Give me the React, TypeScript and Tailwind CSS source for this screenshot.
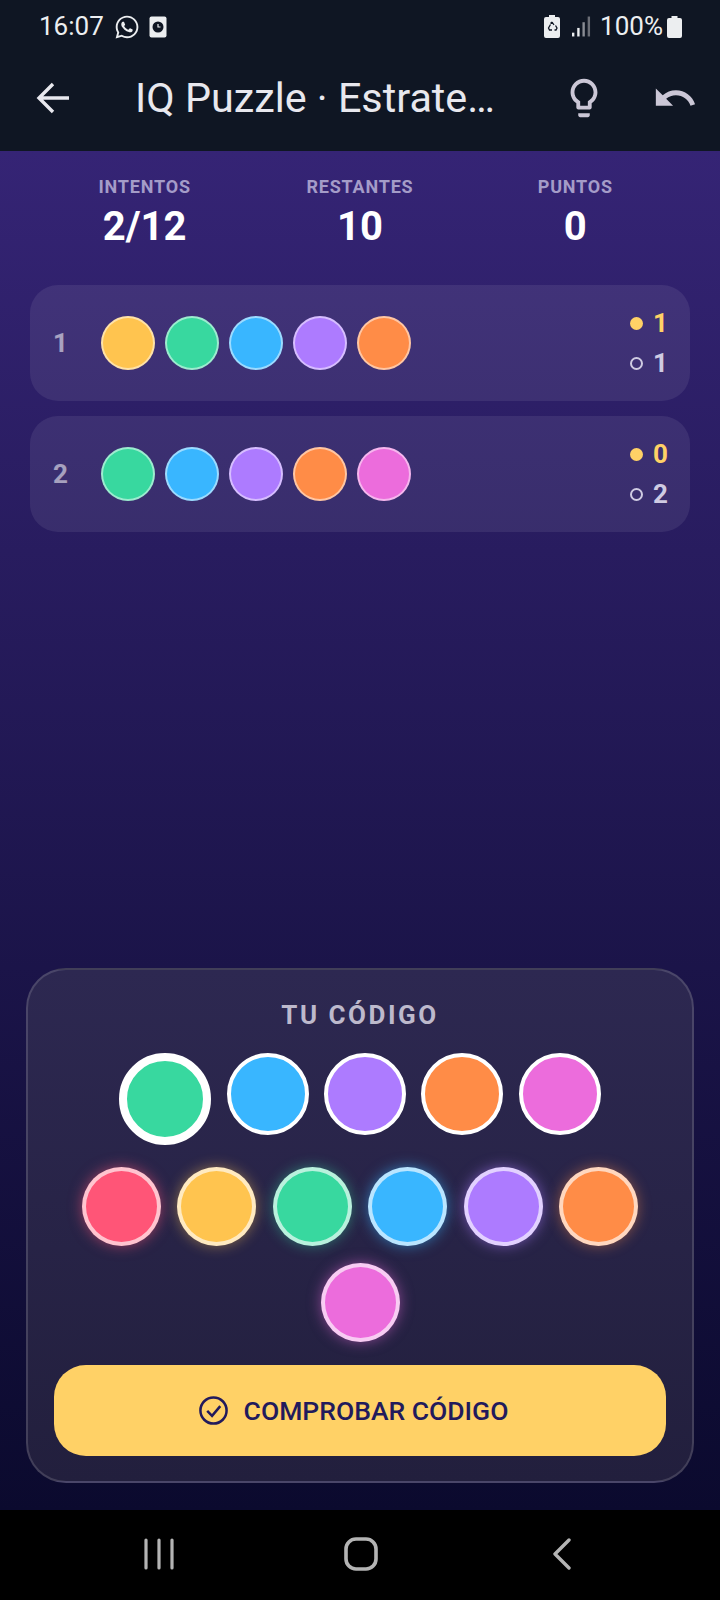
import { FaWhatsapp } from "react-icons/fa";

const RED = "bg-[#ff5577]";
const YELLOW = "bg-[#ffc44f]";
const GREEN = "bg-[#38d89f]";
const BLUE = "bg-[#39b6ff]";
const PURPLE = "bg-[#ad7bff]";
const ORANGE = "bg-[#ff8c47]";
const PINK = "bg-[#ec6cdc]";

const attempts = [
  { n: 1, colors: [YELLOW, GREEN, BLUE, PURPLE, ORANGE], exact: 1, near: 1 },
  { n: 2, colors: [GREEN, BLUE, PURPLE, ORANGE, PINK], exact: 0, near: 2 },
];

const stats = [
  { label: "INTENTOS", value: "2/12" },
  { label: "RESTANTES", value: "10" },
  { label: "PUNTOS", value: "0" },
];

const palette = [
  `${RED} shadow-[0_0_14px_rgba(255,85,119,0.55)]`,
  `${YELLOW} shadow-[0_0_14px_rgba(255,196,79,0.45)]`,
  `${GREEN} shadow-[0_0_14px_rgba(56,216,159,0.45)]`,
  `${BLUE} shadow-[0_0_14px_rgba(57,182,255,0.55)]`,
  `${PURPLE} shadow-[0_0_14px_rgba(173,123,255,0.55)]`,
  `${ORANGE} shadow-[0_0_14px_rgba(255,140,71,0.45)]`,
  `${PINK} shadow-[0_0_14px_rgba(236,108,220,0.5)]`,
];

function StatusBar() {
  return (
    <div className="h-[50px] pl-[39px] pr-[38px] pt-[3px] flex items-center justify-between text-[26px] text-[#eceef0]">
      <div className="flex items-center">
        <span>16:07</span>
        <FaWhatsapp className="ml-[10px] w-[26px] h-[26px]" />
        <svg className="ml-[9px]" width="18" height="22" viewBox="0 0 18 22">
          <rect x="0.5" y="0.5" width="17" height="21" rx="2" fill="#eceef0" />
          <circle cx="9" cy="11" r="5.5" fill="#0f1623" />
          <path d="M9 8v3h2.5" stroke="#eceef0" strokeWidth="1.2" fill="none" />
        </svg>
      </div>
      <div className="flex items-center">
        <svg width="16" height="23" viewBox="0 0 16 23">
          <path d="M5 0h6v2h3a2 2 0 0 1 2 2v17a2 2 0 0 1-2 2H2a2 2 0 0 1-2-2V4a2 2 0 0 1 2-2h3z" fill="#eceef0" />
          <path d="M8 7l2 3M6.5 9.5L4.5 13l1 2h2.5M10.5 15h1.5l1-2-1.5-2.5M6.5 8.500L8 7" stroke="#0f1623" strokeWidth="1.3" fill="none" />
        </svg>
        <svg className="ml-[12px]" width="19" height="21" viewBox="0 0 20 21">
          <rect x="0" y="17" width="2.500" height="4" fill="#eceef0" />
          <rect x="5.500" y="12" width="2.500" height="9" fill="#eceef0" />
          <rect x="11" y="6" width="2.500" height="15" fill="#8a8d94" />
          <rect x="16.500" y="0" width="2.500" height="21" fill="#6b6e76" />
        </svg>
        <span className="ml-[9px]">100%</span>
        <svg className="ml-[4px]" width="15" height="22" viewBox="0 0 15 22">
          <path d="M4.500 0h6v2h2.500a2 2 0 0 1 2 2v16a2 2 0 0 1-2 2H2a2 2 0 0 1-2-2V4a2 2 0 0 1 2-2h2.500z" fill="#eceef0" />
        </svg>
      </div>
    </div>
  );
}

function AppBar() {
  return (
    <div className="h-[101px] flex items-center pb-[5px]">
      <svg className="ml-[36px]" width="34" height="32" viewBox="0 0 34 32" fill="none" stroke="#e8e8ee" strokeWidth="3.4">
        <path d="M33 16H3M17 2L3 16l14 14" />
      </svg>
      <span className="ml-[65px] w-[366px] text-[41.3px] leading-[48px] text-[#e8e8ee] whitespace-nowrap">
        IQ Puzzle · Estrate…
      </span>
      <svg className="ml-[60px]" width="46" height="46" viewBox="0 0 24 24" fill="#cbc7d6">
        <path d="M9 21c0 .55.45 1 1 1h4c.55 0 1-.45 1-1v-1H9v1zm3-19C8.140 2 5 5.140 5 9c0 2.380 1.190 4.470 3 5.740V17c0 .55.45 1 1 1h6c.55 0 1-.45 1-1v-2.260c1.810-1.270 3-3.360 3-5.740 0-3.860-3.140-7-7-7zm2.850 11.100l-.85.6V16h-4v-2.300l-.85-.6C7.800 12.160 7 10.630 7 9c0-2.760 2.240-5 5-5s5 2.240 5 5c0 1.630-.8 3.160-2.150 4.100z" />
      </svg>
      <svg className="ml-[45px]" width="46" height="46" viewBox="0 0 24 24" fill="#cbc7d6">
        <path d="M12.500 8c-2.650 0-5.050.99-6.900 2.600L2 7v9h9l-3.620-3.620c1.390-1.160 3.160-1.880 5.120-1.880 3.540 0 6.550 2.310 7.600 5.500l2.370-.78C21.080 11.030 17.150 8 12.500 8z" />
      </svg>
    </div>
  );
}

function Attempt({ n, colors, exact, near }: { n: number; colors: string[]; exact: number; near: number }) {
  return (
    <div className="h-[116px] rounded-[28px] bg-white/[0.08] flex items-center pl-[23px] pr-[23px]">
      <span className="w-[48px] text-[26px] font-bold text-white/55">{n}</span>
      <div className="flex gap-[10px]">
        {colors.map((c, i) => (
          <div key={i} className={`w-[54px] h-[54px] rounded-full border-2 border-white/50 ${c}`} />
        ))}
      </div>
      <div className="ml-auto flex flex-col gap-[10px] text-[26px] font-bold leading-[30px]">
        <div className="flex items-center gap-[10px] text-[#ffd166]">
          <span className="w-[13px] h-[13px] rounded-full bg-[#ffd166]" />
          <span className="w-[14px]">{exact}</span>
        </div>
        <div className="flex items-center gap-[10px] text-[#cfcbe2]">
          <span className="w-[13px] h-[13px] rounded-full border-2 border-[#cfcbe2]" />
          <span className="w-[14px]">{near}</span>
        </div>
      </div>
    </div>
  );
}

function CodePanel() {
  const slots = [GREEN, BLUE, PURPLE, ORANGE, PINK];
  return (
    <div className="mx-[26px] h-[515px] rounded-[40px] border-2 border-white/[0.14] bg-gradient-to-b from-[#2d2851] to-[#221f3d] px-[26px] pt-[29px]">
      <div className="text-center text-[26px] leading-[32px] font-bold tracking-[2.5px] text-[#bdb9cc]">TU CÓDIGO</div>
      <div className="mt-[22px] flex justify-center items-start gap-[15.3px]">
        {slots.map((c, i) => (
          <div
            key={i}
            className={
              i === 0
                ? `w-[92px] h-[92px] rounded-full border-[8px] border-white ${c}`
                : `w-[82px] h-[82px] rounded-full border-[4px] border-white ${c}`
            }
          />
        ))}
      </div>
      <div className="mt-[22px] flex flex-wrap justify-center gap-x-[16.6px] gap-y-[17px]">
        {palette.map((c, i) => (
          <div key={i} className={`w-[79px] h-[79px] rounded-full border-[4px] border-white/65 ${c}`} />
        ))}
      </div>
      <button className="mt-[23px] w-full h-[91px] rounded-[32px] bg-[#ffd166] flex items-center justify-center gap-[15px] pr-[14px] text-[26.5px] font-medium text-[#221a5c]">
        <svg width="31" height="31" viewBox="0 0 32 32" fill="none" stroke="#221a5c" strokeWidth="2.600">
          <circle cx="16" cy="16" r="13.500" />
          <path d="M9.500 16.500l5 5 8.500-10" />
        </svg>
        COMPROBAR CÓDIGO
      </button>
    </div>
  );
}

export default function App() {
  return (
    <div className="w-[720px] h-[1600px] flex flex-col font-['Roboto',sans-serif]">
      <header className="h-[151px] bg-[#0f1623]">
        <StatusBar />
        <AppBar />
      </header>

      <main className="flex-1 flex flex-col bg-gradient-to-b from-[#352475] to-[#0b0a2e] pb-[27px]">
        <div className="grid grid-cols-3 px-[37px] pt-[25px]">
          {stats.map((s) => (
            <div key={s.label} className="flex flex-col items-center">
              <span className="text-[18px] leading-[22px] font-bold tracking-[0.8px] text-[#a49cc8]">{s.label}</span>
              <span className="mt-[6px] text-[40px] leading-[46px] font-bold text-white">{s.value}</span>
            </div>
          ))}
        </div>

        <div className="mt-[35px] mx-[30px] flex flex-col gap-[15px]">
          {attempts.map((a) => (
            <Attempt key={a.n} {...a} />
          ))}
        </div>

        <div className="flex-1" />
        <CodePanel />
      </main>

      <nav className="h-[90px] bg-black flex items-center pb-[2px]">
        <svg className="ml-[144px]" width="30" height="32" viewBox="0 0 30 32" stroke="#b4b4b4" strokeWidth="3.200" strokeLinecap="round">
          <path d="M2 2v28M15 2v28M28 2v28" />
        </svg>
        <svg className="ml-[170px]" width="34" height="34" viewBox="0 0 34 34" fill="none" stroke="#b4b4b4" strokeWidth="3.600">
          <rect x="2" y="2" width="30" height="30" rx="10" />
        </svg>
        <svg className="ml-[174px]" width="20" height="32" viewBox="0 0 20 32" fill="none" stroke="#b4b4b4" strokeWidth="3.400" strokeLinecap="round" strokeLinejoin="round">
          <path d="M17 2L3 16l14 14" />
        </svg>
      </nav>
    </div>
  );
}
